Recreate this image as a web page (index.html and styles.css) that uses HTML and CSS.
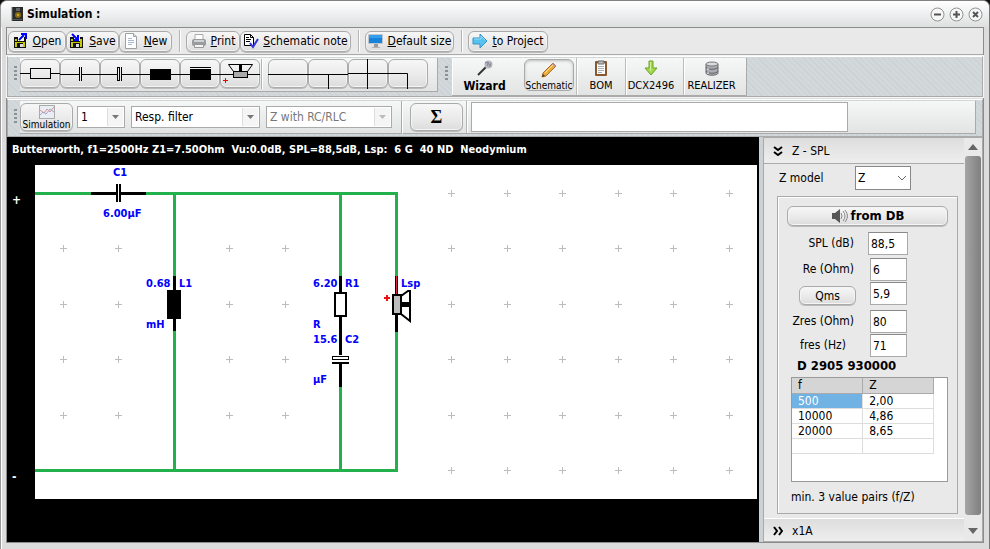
FILE: index.html
```html
<!DOCTYPE html>
<html lang="en">
<head>
<meta charset="utf-8">
<title>Simulation</title>
<link rel="stylesheet" href="styles.css">
</head>
<body>
<div class="window">
  <header class="titlebar">
    <svg width="12" height="14" viewBox="0 0 12 14"><rect width="11" height="14" x="1" fill="#292a2b"/><path d="M1 0V14" stroke="#777" /><rect x="5" y="1" width="4" height="3" fill="#626668"/><circle cx="7" cy="8" r="3" fill="#866b14"/><circle cx="7" cy="8" r="1" fill="#ddb83b"/><path d="M2 12.500H11" stroke="#555"/></svg>
    <h1>Simulation :</h1>
    <div class="controls">
      <button aria-label="Minimize"><svg width="15" height="15" viewBox="0 0 15 15"><circle cx="7.500" cy="7.500" r="6.500"/><path d="M4 7.500h7"/></svg></button>
      <button aria-label="Maximize"><svg width="15" height="15" viewBox="0 0 15 15"><circle cx="7.500" cy="7.500" r="6.500"/><path d="M4 7.500h7M7.500 4v7"/></svg></button>
      <button aria-label="Close"><svg width="15" height="15" viewBox="0 0 15 15"><circle cx="7.500" cy="7.500" r="6.500"/><path d="M5 5l5 5M10 5l-5 5"/></svg></button>
    </div>
  </header>
  <div class="content">
    <nav class="menu">
      <button class="btn open"><svg width="16" height="16" viewBox="0 0 16 16"><path d="M1 4h12v11H1z" fill="#111"/><path d="M2 6h2v2H2zM2 9h2v5H2zM10 9h2v5h-2z" fill="#c6c800"/><path d="M5 4h6v4H5z" fill="#fff"/><path d="M4 9h6v1H4z" fill="#c6c800"/><path d="M5 11h5v3H5z" fill="#ddd"/><path d="M5 11h2v3H5z" fill="#111"/><path d="M6 7l5-5M8 1h5v5" fill="none" stroke="#00f" stroke-width="2"/></svg><span><u>O</u>pen</span></button>
      <button class="btn save"><svg width="16" height="16" viewBox="0 0 16 16"><path d="M1 4h13v11H1z" fill="#111"/><path d="M2 6h2v2H2zM2 9h2v5H2zM11 6h2v8h-2z" fill="#c6c800"/><path d="M5 4h6v4H5z" fill="#fff"/><path d="M4 9h7v1H4z" fill="#c6c800"/><path d="M5 11h5v3H5z" fill="#ddd"/><path d="M5 11h2v3H5z" fill="#111"/><path d="M3 1l5 5M9 2v5H4" fill="none" stroke="#00f" stroke-width="2"/></svg><span><u>S</u>ave</span></button>
      <button class="btn new"><svg width="16" height="16" viewBox="0 0 16 16"><path d="M1.500.5h8l3 3v12h-11z" fill="#fff" stroke="#9da0a3"/><path d="M9.500.5v3h3" fill="#ddd" stroke="#9da0a3"/><path d="M4 5.500h4M4 7.500h6M4 9.500h6M4 11.500h4" stroke="#a9b8cc"/></svg><span><u>N</u>ew</span></button>
      <i class="sep menu-sep"></i>
      <button class="btn print"><svg width="16" height="16" viewBox="0 0 16 16"><path d="M4 1.500h8v6H4z" fill="#fff" stroke="#aaa"/><rect x="1" y="6" width="14" height="7" rx="2" fill="#999c9f"/><path d="M3 7h10v2H3z" fill="#d0d2d4"/><path d="M3.500 11.500h9v3h-9z" fill="#f5f5f5" stroke="#999"/></svg><span><u>P</u>rint</span></button>
      <button class="btn note"><svg width="16" height="16" viewBox="0 0 16 16"><path d="M1.500 1.500h6l3 3v8h-9z" fill="#fff" stroke="#000"/><path d="M7.500 1.500v3h3M3 4.500h3M3 6.500h5M3 8.500h4" stroke="#000" fill="none"/><path d="M7 10l3 4 5-8" fill="none" stroke="#33d" stroke-width="2"/></svg><span><u>S</u>chematic note</span></button>
      <i class="sep menu-sep"></i>
      <button class="btn size"><svg width="16" height="16" viewBox="0 0 16 16"><rect x="0" y="1" width="15" height="10" rx="1" fill="#bfc5ca"/><rect x="1" y="2" width="13" height="8" fill="#1683dc"/><path d="M1 2h13v3H1z" fill="#32a0ef"/><path d="M6 11h4v3H6z" fill="#999"/><path d="M4 14h8v1H4z" fill="#b4b4b4"/></svg><span><u>D</u>efault size</span></button>
      <i class="sep menu-sep"></i>
      <button class="btn project"><svg width="16" height="16" viewBox="0 0 16 16"><path d="M1 5h7V1l7 7-7 7v-4H1z" fill="#55c2f0" stroke="#3a91c4"/><path d="M2 6h7V3l4 4" stroke="#92ddfb" fill="none"/></svg><span><u>t</u>o Project</span></button>
    </nav>

    <div class="tools texture">
      <i class="grip"></i>
      <div class="group parts">
        <button class="tool" aria-label="Resistor"><svg width="40" height="30" viewBox="0 0 40 30"><path d="M0 14.500h10M31 14.500h9"/><rect x="10.500" y="9.500" width="20" height="10"/></svg></button>
        <button class="tool" aria-label="Capacitor"><svg width="40" height="30" viewBox="0 0 40 30"><path d="M0 15.500h19M22 15.500h18M19.500 8v14M21.500 8v14"/></svg></button>
        <button class="tool" aria-label="Electrolytic capacitor"><svg width="40" height="30" viewBox="0 0 40 30"><path d="M0 15.500h17M22 15.500h18M21.500 8v14"/><rect x="17.500" y="8.500" width="2" height="13"/></svg></button>
        <button class="tool" aria-label="Coil"><svg width="40" height="30" viewBox="0 0 40 30"><path d="M0 15.500h40"/><path class="solid" d="M10 10h21v11H10z"/></svg></button>
        <button class="tool" aria-label="Core coil"><svg width="40" height="30" viewBox="0 0 40 30"><path d="M0 15.500h40M10 8.500h21"/><path class="solid" d="M10 10h21v11H10z"/></svg></button>
        <button class="tool" aria-label="Speaker"><svg width="40" height="30" viewBox="0 0 40 30"><path d="M0 15.500h13M28 15.500h12M13.500 12.500L8.500 5.500H32.500L27.500 12.500"/><rect x="13.500" y="12.500" width="14" height="6" fill="#aaa"/><path class="solid" d="M19 5h3v8h-3z"/><path d="M3 21.500h5M5.500 19v5" stroke="#f00"/></svg></button>
        <i class="sep tool-sep"></i>
        <button class="tool" aria-label="Wire"><svg width="40" height="32" viewBox="0 0 40 32"><path d="M0 15.500h40"/></svg></button>
        <button class="tool" aria-label="Branch"><svg width="40" height="32" viewBox="0 0 40 32"><path d="M0 15.500h40M20.500 16v14"/></svg></button>
        <button class="tool" aria-label="Crossing"><svg width="40" height="32" viewBox="0 0 40 32"><path d="M0 14.500h40M19.500 0v30"/></svg></button>
        <button class="tool" aria-label="Corner"><svg width="40" height="32" viewBox="0 0 40 32"><path d="M0 14.500h19.500V30"/></svg></button>
      </div>
      <i class="grip second"></i>
      <div class="group views">
        <button class="view wizard"><svg width="16" height="16" viewBox="0 0 16 16"><path d="M1 15L10 6" stroke="#333" stroke-width="2"/><circle cx="11.500" cy="4.500" r="4" fill="#b8bcc0"/><path d="M8 3l3-1M14 3l-2 4M10 6l2-4" stroke="#718b87"/><path d="M9 2l5 4" stroke="#a579a5"/></svg><span>Wizard</span></button>
        <button class="view schematic"><svg width="16" height="16" viewBox="0 0 16 16"><path d="M1 15l1-4L12 1l3 3L5 14z" fill="#eea93c" stroke="#a67028"/><path d="M4 11l8-8" stroke="#ffe19b"/><path d="M11 2l1-1 3 3-1 1z" fill="#c88aab"/><path d="M1 15l1-3 2 2z" fill="#49382d"/></svg><span>Schematic</span></button>
        <button class="view bom"><svg width="16" height="16" viewBox="0 0 16 16"><rect x="2" y="1" width="12" height="15" rx="1" fill="#8a572e"/><path d="M4 3h8v11H4z" fill="#fff"/><path d="M5 1h6v3H5z" fill="#bbb" stroke="#666"/><path d="M5 6.500h6M5 8.500h6M5 10.500h6M5 12.500h4" stroke="#aaa"/></svg><span>BOM</span></button>
        <button class="view dcx"><svg width="16" height="16" viewBox="0 0 16 16"><path d="M6 1h4v7h4l-6 7-6-7h4z" fill="#a2d94b" stroke="#68a329"/><path d="M7.500 2v9" stroke="#d2f18f"/></svg><span>DCX2496</span></button>
        <button class="view realizer"><svg width="16" height="16" viewBox="0 0 16 16"><path d="M2 4v9c0 3 12 3 12 0V4z" fill="#a9adb1" stroke="#686c70"/><ellipse cx="8" cy="4" rx="6" ry="2" fill="#d9dcde" stroke="#777"/><path d="M2 7c1 3 11 3 12 0M2 11c1 3 11 3 12 0" stroke="#606468" fill="none"/><path d="M4 8v2M4 12v2" stroke="#eee"/></svg><span>REALIZER</span></button>
      </div>
    </div>

    <div class="settings texture">
      <i class="grip"></i>
      <div class="group fields">
        <button class="btn simulate"><svg width="16" height="14" viewBox="0 0 16 14"><rect x=".5" y=".5" width="15" height="13" fill="#e9eef5" stroke="#aaa"/><path d="M1 10l3-3 3 2 4-5 4 3" stroke="#92add2" fill="none"/><path d="M1 5l4 3 3-4 3 3 4-5" stroke="#df9292" fill="none"/></svg><span>Simulation</span></button>
        <label class="combo order"><select aria-label="Filter number"><option>1</option></select><svg width="9" height="5" viewBox="0 0 9 5"><path d="M1 0h7L4.500 4z"/></svg></label>
        <label class="combo type"><select aria-label="Type"><option>Resp. filter</option></select><svg width="9" height="5" viewBox="0 0 9 5"><path d="M1 0h7L4.500 4z"/></svg></label>
        <label class="combo zmode"><select aria-label="Impedance" disabled><option>Z with RC/RLC</option></select><svg width="9" height="5" viewBox="0 0 9 5"><path d="M1 0h7L4.500 4z"/></svg></label>
      </div>
      <div class="group formula">
        <button class="btn sigma">Σ</button>
        <i class="sep"></i>
        <input type="text" aria-label="Formula">
      </div>
    </div>

    <main class="work">
      <section class="drawing">
        <h2>Butterworth, f1=2500Hz Z1=7.50Ohm&nbsp; Vu:0.0dB, SPL=88,5dB, Lsp:&nbsp; 6 G&nbsp; 40 ND&nbsp; Neodymium</h2>
        <div class="board">
          <div class="poles"><span>+</span><span>-</span></div>
          <svg class="circuit" height="334">
            <defs><pattern id="grid" width="111" height="111" patternUnits="userSpaceOnUse"><path d="M25 28.500h7M28.500 25v7M80 28.500h7M83.500 25v7M25 83.500h7M28.500 80v7M80 83.500h7M83.500 80v7" stroke="#bdbdbd"/></pattern></defs>
            <rect width="100%" height="334" fill="#fff"/><rect width="100%" height="334" fill="url(#grid)"/>
            <path class="clearance" d="M0 28.500H361.500V305.500H0M139.500 28.500V305.500M305.500 28.500V305.500"/>
            <path class="wire" d="M0 28.500H361.500V305.500H0M139.500 28.500V305.500M305.500 28.500V305.500"/>
            <path class="lead" d="M56 28.500h26M86 28.500h25M139.500 111v55M305.500 111v79M305.500 198v24M361.500 143v24"/>
            <path d="M81 19h5v18h-5z" fill="#fff"/><path d="M81 19h2v18h-2zM84 19h2v18h-2zM132 125h14v29h-14z"/>
            <rect x="300" y="128" width="11" height="23" fill="#fff" stroke="#000" stroke-width="2"/>
            <path d="M297 190h17v8h-17z" fill="#fff"/><rect x="297.500" y="191.500" width="16" height="3" fill="#fff" stroke="#000"/><path d="M297 197h17v2h-17z"/>
            <path class="lead" d="M361.500 111v18"/><path d="M361.500 111v18" stroke="#e02445"/>
            <path d="M366 131l7-5h2v30l-9-7" fill="#fff" stroke="#000" stroke-width="2"/><path d="M366 137h9v5h-9z"/>
            <rect x="358" y="130" width="8" height="19" fill="#bdbdbd" stroke="#000" stroke-width="2"/>
            <path d="M349 133h6M352 130v6" stroke="#e11" stroke-width="2"/>
            <text x="78" y="11">C1</text><text x="68" y="52">6.00µF</text>
            <text x="111" y="122">0.68</text><text x="144" y="122">L1</text><text x="111" y="163">mH</text>
            <text x="278" y="122">6.20</text><text x="310" y="122">R1</text><text x="278" y="163">R</text><text x="278" y="178">15.6</text><text x="310" y="178">C2</text><text x="278" y="218">µF</text><text x="366" y="122">Lsp</text>
          </svg>
        </div>
      </section>
      <aside class="side">
        <div class="side-main">
          <button class="fold"><svg width="10" height="10" viewBox="0 0 10 10"><path d="M1 1l4 3 4-3M1 6l4 3 4-3"/></svg><span>Z - SPL</span></button>
          <div class="panel">
            <div class="model"><label for="model">Z model</label><div class="picker"><select id="model"><option>Z</option></select><svg width="9" height="5" viewBox="0 0 9 5"><path d="M0 0l4 4 4-4"/></svg></div></div>
            <form class="box">
              <button type="button" class="btn db"><svg width="17" height="16" viewBox="0 0 17 16"><path d="M1 5h3l5-4v14l-5-4H1z" fill="#555"/><path d="M10 5q2 3 0 6M12 3q4 5 0 10M14 2q5 6 0 12" stroke="#888" fill="none"/></svg><span>from DB</span></button>
              <div class="values">
                <label for="spl">SPL (dB)</label><input id="spl" class="wide" value="88,5">
                <label for="re">Re (Ohm)</label><input id="re" value="6">
                <button type="button" class="btn qms">Qms</button><input aria-label="Qms" value="5,9">
                <label for="zres">Zres (Ohm)</label><input id="zres" value="80">
                <label for="fres" class="short">fres (Hz)</label><input id="fres" value="71">
              </div>
              <h3>D 2905 930000</h3>
              <div class="sheet"><table>
                <thead><tr><th>f</th><th>Z</th></tr></thead>
                <tbody><tr><td class="picked">500</td><td>2,00</td></tr><tr><td>10000</td><td>4,86</td></tr><tr><td>20000</td><td>8,65</td></tr><tr><td></td><td></td></tr></tbody>
              </table></div>
              <p>min. 3 value pairs (f/Z)</p>
            </form>
          </div>
          <button class="fold bottom"><svg width="10" height="10" viewBox="0 0 10 10"><path d="M1 1l3 4-3 4M6 1l3 4-3 4"/></svg><span>x1A</span></button>
        </div>
        <div class="scroll"><svg width="10" height="6" viewBox="0 0 10 6"><path d="M0 6h10L5 0z"/></svg><i></i><svg width="10" height="6" viewBox="0 0 10 6"><path d="M0 0h10L5 6z"/></svg></div>
      </aside>
    </main>
  </div>
</div>
</body>
</html>
```
FILE: styles.css
```css
* { box-sizing: border-box; }
body { margin: 0; background: #111; color: #000; font: 12px/16px "DejaVu Sans Condensed", "Noto Sans", sans-serif; }
h1, h2, h3, p { margin: 0; font-size: 12px; }
button, input, select { font: inherit; color: inherit; margin: 0; padding: 0; }
button { border: 0; background: none; white-space: nowrap; }
svg { display: block; flex: none; }

.window { display: flex; flex-direction: column; min-height: 100vh; padding: 0 6px 6px; border: 1px solid #828282; border-bottom-width: 2px; border-left-color: #999; border-right-color: #777; border-radius: 7px 7px 0 0; background: #dcdcdc; box-shadow: inset 1px 1px #fff; }
.titlebar { display: flex; align-items: center; height: 26px; margin: 0 -6px; padding: 0 6px 0 10px; gap: 4px; border-radius: 6px 6px 0 0; background: linear-gradient(#fff, #f3f4f5 35%, #dee0e0); }
.controls { display: flex; gap: 4px; margin-left: auto; }
.controls svg { fill: #f7f7f7; stroke: #929292; }
.controls path { stroke: #555; stroke-width: 2; }
.content { flex: 1; display: flex; flex-direction: column; border: 1px solid #8c8c8c; margin: 0 -1px; }

.btn, .tool { border: 1px solid #aaa; border-radius: 6px; background: linear-gradient(#f7f7f7, #e9e9e9 60%, #dcdcdc); box-shadow: inset 0 0 0 1px #f5f5f5, 0 1px #bbb; }
.btn { display: flex; align-items: center; justify-content: center; }
.menu { display: flex; align-items: center; height: 27px; padding: 0 1px; background: #e9e9e9; border-bottom: 1px solid #aaa; }
.menu .btn { height: 21px; gap: 4px; }
.open { width: 58px; }
.save { width: 53px; }
.new { width: 53px; }
.print { width: 54px; }
.note { width: 111px; }
.size { width: 89px; }
.project { width: 80px; }
.sep { flex: none; align-self: stretch; width: 2px; border-left: 1px solid #b4b4b4; border-right: 1px solid #fff; }
.menu-sep { margin: 2px 5px 2px 7px; }

.texture { background: repeating-linear-gradient(45deg, #d2d7da 0 1px, #cbd1d5 1px 2px, #d3d8db 2px 4px); border: 1px solid #aaa; border-top: 1px solid #fff; }
.tools { display: flex; align-items: flex-start; height: 41px; margin-top: 1px; padding: 1px 0; outline: 1px solid #f5f5f5; }
.grip { flex: none; width: 12px; height: 15px; margin-top: 8px; background: repeating-linear-gradient(#8e9194 0 2px, transparent 2px 4px) 6px 0 / 3px 15px no-repeat; }
.group { display: flex; background: linear-gradient(#f6f7f7, #e2e4e4); border-right: 1px solid #aaa; border-bottom: 1px solid #aaa; }
.parts { width: 418px; height: 34px; padding-top: 1px; }
.tool { width: 40px; height: 29px; flex: none; }
.tool svg { margin: -1px; fill: none; stroke: #000; }
.tool .solid { fill: #000; stroke: none; }
.tool-sep { margin: 0 5px 2px 1px; }
.second { margin-left: 1px; }
.views { width: 295px; height: 38px; margin-left: 1px; }
.view { display: flex; flex-direction: column; align-items: center; font-size: 11px; line-height: 16px; padding-top: 2px; gap: 2px; border-left: 1px solid #bbb; box-shadow: inset 1px 0 #fff; }
.wizard { width: 65px; border: 0; font-size: 12px; font-weight: bold; }
.schematic { width: 50px; height: 32px; margin: 1px 2px 0 7px; padding: 2px 0; border: 1px solid #aaa; border-radius: 6px; font-size: 10px; line-height: 11px; box-shadow: inset 0 1px 3px #bbb; }
.bom { width: 49px; }
.dcx { width: 51px; }
.realizer { width: 56px; margin-left: 7px; }

.settings { display: flex; height: 38px; margin-top: 2px; padding: 1px 6px 2px 0; }
.fields { width: 382px; align-items: center; }
.simulate { flex-direction: column; width: 53px; height: 28px; margin-right: 4px; font-size: 10px; line-height: 11px; }
.combo { position: relative; height: 22px; margin-right: 6px; border: 1px solid #aaa; background: #fff; }
.combo select { appearance: none; display: block; width: 100%; height: 20px; padding: 0 3px; border: 0; background: none; opacity: 1; }
.combo svg { position: absolute; right: 1px; top: 1px; box-sizing: content-box; padding: 7px 3px 6px; border-left: 1px solid #ddd; fill: #777; background: #f5f5f5; }
.order { width: 48px; }
.type { width: 129px; }
.zmode { width: 126px; color: #777; }
.zmode svg { fill: #bbb; }
.formula { flex: 1; align-items: center; padding-left: 7px; border-left: 1px solid #fff; }
.sigma { width: 53px; height: 28px; margin-right: 3px; font: bold 18px/20px "Liberation Serif", serif; }
.formula input { flex: 0 1 377px; width: 377px; height: 30px; margin-left: 3px; border: 1px solid #aaa; background: #fff; }

.work { flex: 1; display: flex; background: #cbd1d4; }
.drawing { flex: 1; min-width: 0; padding-right: 2px; background: #000; color: #fff; }
h2 { height: 28px; padding: 5px 0 0 5px; font-size: 11px; line-height: 15px; white-space: pre; }
.board { display: flex; }
.poles { flex: none; width: 28px; height: 334px; padding: 28px 5px 14px; display: flex; flex-direction: column; justify-content: space-between; font-weight: bold; line-height: 15px; }
.circuit { flex: 1; min-width: 0; }
.circuit text { font-size: 11px; font-weight: bold; fill: #00f; }
.clearance { fill: none; stroke: #fff; stroke-width: 11; }
.wire { fill: none; stroke: #22b14c; stroke-width: 3; }
.lead { fill: none; stroke: #000; stroke-width: 3; }

.side { flex: none; display: flex; width: 220px; margin-left: 4px; border: 1px solid #aaa; background: #e9e9e9; }
.side-main { flex: 1; display: flex; flex-direction: column; }
.fold { display: flex; align-items: center; gap: 9px; height: 26px; padding: 0 9px; background: linear-gradient(#ddd, #eee); border-bottom: 1px solid #aaa; }
.fold svg { fill: none; stroke: #000; stroke-width: 2; }
.bottom { height: 22px; padding-top: 2px; border: 0; }
.panel { flex: 1; padding: 2px 6px 4px 13px; border-bottom: 1px solid #fff; }
.model { display: flex; height: 24px; }
.model label { width: 78px; padding-top: 4px; padding-left: 2px; }
.picker { position: relative; width: 56px; }
.picker select { appearance: none; width: 56px; height: 24px; padding: 0 2px; border: 1px solid #888; background: #fff; }
.picker svg { position: absolute; right: 4px; top: 10px; fill: none; stroke: #666; }
.box { height: 318px; margin-top: 6px; padding: 9px; border: 1px solid #aaa; box-shadow: inset 1px 1px #fff; }
.db { width: 161px; height: 20px; gap: 3px; font-size: 13px; font-weight: bold; }
.values { display: grid; grid-template-columns: 83px 39px; grid-template-rows: 26px 24px 28px 24px 24px; margin-top: 6px; align-items: start; }
.values label { padding-right: 16px; padding-top: 3px; text-align: right; white-space: nowrap; justify-self: end; }
.values .short { padding-right: 24px; }
.values input { width: 37px; height: 23px; padding: 0 2px; border: 1px solid #aaa; border-top-color: #888; background: #fff; }
.values .wide { width: 40px; margin-left: -2px; }
.qms { width: 57px; height: 19px; margin: 4px 0 0 12px; }
h3 { margin: 0 0 3px 10px; font-size: 13px; }
.sheet { height: 105px; width: 157px; margin-left: 4px; border: 1px solid #999; background: #fff; }
table { width: 142px; border-collapse: collapse; table-layout: fixed; }
th, td { height: 15px; padding: 0 6px; border-right: 1px solid #ddd; border-bottom: 1px solid #ddd; font-weight: normal; line-height: 14px; text-align: left; }
th { background: #d5d5d5; border-color: #aaa; }
.picked { background: #70b2e3; color: #fff; }
.box p { margin: 7px 0 0 4px; }
.scroll { flex: none; display: flex; flex-direction: column; align-items: center; width: 18px; padding: 6px 0 7px; }
.scroll svg { fill: #666; }
.scroll i { flex: 1; width: 16px; margin: 6px 0 13px; border-radius: 3px; background: linear-gradient(90deg, #a5a5a5, #7f7f7f); }
```
